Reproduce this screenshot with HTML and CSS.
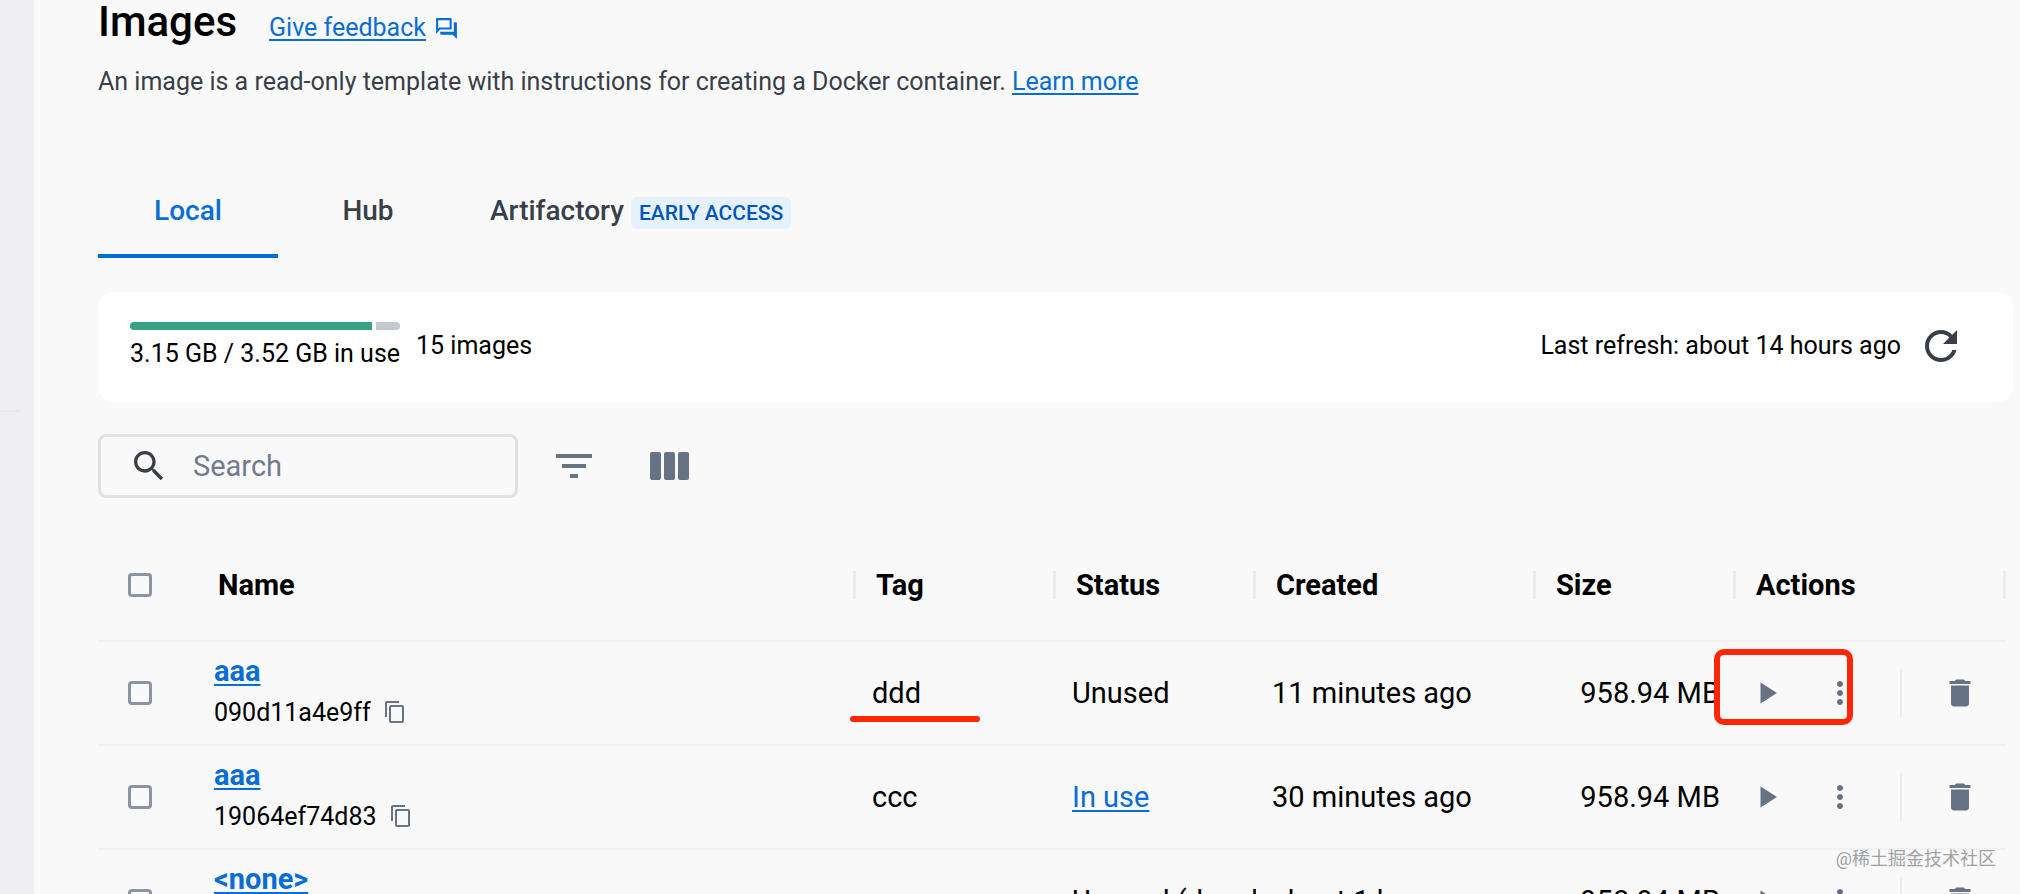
FILE: index.html
```
<!DOCTYPE html>
<html lang="en">
<head>
<meta charset="utf-8">
<title>Images</title>
<link rel="stylesheet" href="styles.css">
</head>
<body>
<svg class="sprite" aria-hidden="true">
  <symbol id="forum" viewBox="0 0 24 24"><path d="M15 4v7H5.170L4 12.170V4h11m1-2H3c-.55 0-1 .45-1 1v14l4-4h10c.55 0 1-.45 1-1V3c0-.55-.45-1-1-1zm5 4h-2v9H6v2c0 .55.45 1 1 1h11l4 4V7c0-.55-.45-1-1-1z"/></symbol>
  <symbol id="refresh" viewBox="0 0 24 24"><path d="M17.650 6.350C16.200 4.900 14.210 4 12 4c-4.420 0-7.990 3.580-7.990 8s3.570 8 7.990 8c3.730 0 6.840-2.550 7.730-6h-2.080c-.82 2.330-3.040 4-5.650 4-3.310 0-6-2.690-6-6s2.690-6 6-6c1.660 0 3.140.69 4.220 1.780L13 11h7V4l-2.350 2.350z"/></symbol>
  <symbol id="search" viewBox="0 0 24 24"><path d="M15.500 14h-.79l-.28-.27C15.410 12.590 16 11.110 16 9.500 16 5.910 13.090 3 9.500 3S3 5.910 3 9.500 5.910 16 9.500 16c1.610 0 3.090-.59 4.230-1.570l.27.28v.79l5 4.990L20.490 19l-4.990-5zm-6 0C7.010 14 5 11.990 5 9.500S7.010 5 9.500 5 14 7.010 14 9.500 11.990 14 9.500 14z"/></symbol>
  <symbol id="filter" viewBox="0 0 24 24"><path d="M10 18h4v-2h-4v2zM3 6v2h18V6H3zm3 7h12v-2H6v2z"/></symbol>
  <symbol id="columns" viewBox="0 0 39 28"><rect width="11" height="28" rx="2"/><rect x="14" width="11" height="28" rx="2"/><rect x="28" width="11" height="28" rx="2"/></symbol>
  <symbol id="copy" viewBox="0 0 24 24"><path d="M16 1H4c-1.100 0-2 .9-2 2v14h2V3h12V1zm3 4H8c-1.100 0-2 .9-2 2v14c0 1.100.9 2 2 2h11c1.100 0 2-.9 2-2V7c0-1.100-.9-2-2-2zm0 16H8V7h11v14z"/></symbol>
  <symbol id="play" viewBox="0 0 24 24"><path d="M7 5v14l11-7z"/></symbol>
  <symbol id="more" viewBox="0 0 24 24"><path d="M12 8c1.100 0 2-.9 2-2s-.9-2-2-2-2 .9-2 2 .9 2 2 2zm0 2c-1.100 0-2 .9-2 2s.9 2 2 2 2-.9 2-2-.9-2-2-2zm0 6c-1.100 0-2 .9-2 2s.9 2 2 2 2-.9 2-2-.9-2-2-2z"/></symbol>
  <symbol id="trash" viewBox="0 0 24 24"><path d="M6 19c0 1.100.9 2 2 2h8c1.100 0 2-.9 2-2V7H6v12zM19 4h-3.500l-1-1h-5l-1 1H5v2h14V4z"/></symbol>
</svg>
<div class="app">
  <aside class="rail"><hr class="rail-rule"></aside>
  <main class="page">
    <header class="heading">
      <h1>Images</h1>
      <a class="feedback" href="#"><span class="link-text">Give feedback</span><svg class="icon-small"><use href="#forum"/></svg></a>
    </header>
    <p class="intro">An image is a read-only template with instructions for creating a Docker container. <a href="#">Learn more</a></p>
    <nav class="tabs">
      <button class="tab active" type="button">Local</button>
      <button class="tab" type="button">Hub</button>
      <button class="tab" type="button">Artifactory <span class="badge">EARLY ACCESS</span></button>
    </nav>
    <section class="usage">
      <div class="disk">
        <div class="meter"><span class="used"></span><span class="free"></span></div>
        <span>3.15 GB / 3.52 GB in use</span>
      </div>
      <span class="count">15 images</span>
      <span class="last">Last refresh: about 14 hours ago</span>
      <button class="refresh" type="button" aria-label="Refresh"><svg class="icon-refresh"><use href="#refresh"/></svg></button>
    </section>
    <div class="toolbar">
      <label class="search"><svg class="icon-search"><use href="#search"/></svg><input type="text" placeholder="Search" aria-label="Search"></label>
      <button type="button" aria-label="Filter"><svg class="icon-filter"><use href="#filter"/></svg></button>
      <button class="column-picker" type="button" aria-label="Columns"><svg class="icon-columns"><use href="#columns"/></svg></button>
    </div>
    <table class="images">
      <colgroup><col class="c-check"><col class="c-name"><col class="c-tag"><col class="c-status"><col class="c-created"><col class="c-size"><col class="c-actions"></colgroup>
      <thead>
        <tr>
          <th><input type="checkbox" aria-label="Select all images"></th>
          <th><div class="label">Name</div></th><th><div class="label">Tag</div></th><th><div class="label">Status</div></th><th><div class="label">Created</div></th><th><div class="label">Size</div></th><th><div class="label">Actions</div></th>
        </tr>
      </thead>
      <tbody>
        <tr>
          <td><input type="checkbox" aria-label="Select 090d11a4e9ff"></td>
          <td><a class="name" href="#">aaa</a><div class="hash">090d11a4e9ff<button type="button" aria-label="Copy"><svg class="icon-copy"><use href="#copy"/></svg></button></div></td>
          <td><span class="marked">ddd</span></td>
          <td>Unused</td>
          <td>11 minutes ago</td>
          <td class="size">958.94 MB</td>
          <td class="action-cell"><div class="actions highlighted"><button type="button" aria-label="Run"><svg class="icon-action"><use href="#play"/></svg></button><button class="more" type="button" aria-label="More"><svg class="icon-action"><use href="#more"/></svg></button><button class="delete" type="button" aria-label="Delete"><svg class="icon-action"><use href="#trash"/></svg></button></div></td>
        </tr>
        <tr>
          <td><input type="checkbox" aria-label="Select 19064ef74d83"></td>
          <td><a class="name" href="#">aaa</a><div class="hash">19064ef74d83<button type="button" aria-label="Copy"><svg class="icon-copy"><use href="#copy"/></svg></button></div></td>
          <td>ccc</td>
          <td><a href="#">In use</a></td>
          <td>30 minutes ago</td>
          <td class="size">958.94 MB</td>
          <td class="action-cell"><div class="actions"><button type="button" aria-label="Run"><svg class="icon-action"><use href="#play"/></svg></button><button class="more" type="button" aria-label="More"><svg class="icon-action"><use href="#more"/></svg></button><button class="delete" type="button" aria-label="Delete"><svg class="icon-action"><use href="#trash"/></svg></button></div></td>
        </tr>
        <tr>
          <td><input type="checkbox" aria-label="Select untagged image"></td>
          <td><a class="name" href="#">&lt;none&gt;</a><div class="hash"></div></td>
          <td></td>
          <td><div class="clip">Unused (dangling)</div></td>
          <td>about 1 hour ago</td>
          <td class="size">958.94 MB</td>
          <td class="action-cell"><div class="actions"><button type="button" aria-label="Run"><svg class="icon-action"><use href="#play"/></svg></button><button class="more" type="button" aria-label="More"><svg class="icon-action"><use href="#more"/></svg></button><button class="delete" type="button" aria-label="Delete"><svg class="icon-action"><use href="#trash"/></svg></button></div></td>
        </tr>
      </tbody>
    </table>
  </main>
  <div class="watermark" lang="zh">@稀土掘金技术社区</div>
</div>
</body>
</html>
```
FILE: styles.css
```
*, *::before, *::after { box-sizing: border-box; }
body { margin: 0; font-family: Roboto, "Noto Sans CJK SC", sans-serif; font-size: 29px; color: #000; background: #f9f9fa; }
.sprite { display: none; }
svg { display: block; fill: currentColor; }
button { margin: 0; padding: 0; border: 0; background: none; font: inherit; color: #677285; }
a { color: #086dd7; text-decoration-thickness: 2px; text-underline-offset: 3px; }
.app { position: relative; display: flex; height: 100vh; overflow: hidden; }
.rail { flex: 0 0 34px; padding-top: 410px; background: #efeff2; }
.rail-rule { width: 20px; margin: 0; border: 0; border-top: 2px solid #e6e7ea; }
.page { flex: 1; min-width: 0; padding: 0 7px 0 64px; }

.heading { display: flex; align-items: center; gap: 32px; height: 44px; }
h1 { margin: 0; font-size: 42px; font-weight: 500; line-height: 44px; }
.feedback { display: flex; align-items: center; gap: 8px; padding-top: 12px; font-size: 25px; line-height: 32px; text-decoration: none; }
.link-text { text-decoration: underline; text-decoration-thickness: 2px; }
.icon-small { width: 25px; height: 25px; }
.intro { margin: 20px 0 0; font-size: 25px; line-height: 36px; color: #393f49; }

.tabs { display: flex; height: 96px; margin-top: 62px; }
.tab { min-width: 180px; height: 96px; padding: 4px 32px 0; border-bottom: 4px solid transparent; font-size: 28px; font-weight: 500; color: #393f49; }
.tab.active { border-color: #086dd7; color: #086dd7; }
.badge { padding: 4px 8px; border-radius: 6px; background: #e5f2fc; font-size: 21px; color: #0055b8; }

.usage { display: flex; align-items: center; height: 110px; margin-top: 34px; padding: 0 48px 2px 32px; border-radius: 16px; background: #fff; font-size: 25px; line-height: 32px; }
.disk { display: flex; flex-direction: column; gap: 8px; }
.meter { display: flex; gap: 4px; height: 8px; border-radius: 4px; overflow: hidden; }
.used { flex: 10; background: #38a087; }
.free { flex: 1; background: #c4c8d1; }
.count { margin-left: 16px; }
.last { margin-left: auto; }
.refresh { margin-left: 16px; color: #393f49; }
.icon-refresh { width: 48px; height: 48px; }

.toolbar { display: flex; align-items: center; gap: 32px; margin-top: 32px; }
.search { display: flex; align-items: center; gap: 24px; width: 420px; height: 64px; padding: 0 28px; border: 3px solid #e1e2e6; border-radius: 8px; color: #393f49; }
.search input { flex: 1; min-width: 0; padding: 0; border: 0; outline: 0; background: none; font: inherit; }
.search input::placeholder { color: #737a8c; opacity: 1; }
.icon-search { width: 40px; height: 40px; }
.icon-filter { width: 48px; height: 48px; }
.column-picker { padding-left: 20px; }
.icon-columns { width: 39px; height: 28px; }

.table-wrap { padding-right: 8px; }
.images { width: calc(100% - 7px); margin-top: 31px; border-collapse: collapse; table-layout: fixed; }
.c-check { width: 112px; }
.c-tag, .c-status, .c-size { width: 200px; }
.c-created { width: 280px; }
.c-actions { width: 270px; }
.images tr { height: 104px; border-bottom: 2px solid #f0f1f3; }
.images thead tr { height: 112px; }
.images th, .images td { padding: 0 0 0 16px; text-align: left; font-weight: 400; white-space: nowrap; }
.images th:nth-child(2), .images td:nth-child(2) { padding-left: 4px; }
.images th:first-child, .images td:first-child { padding-left: 30px; }
.images .label { height: 28px; padding-left: 4px; border-right: 3px solid #ececef; font-weight: 700; line-height: 28px; }
.images .size { padding-right: 16px; text-align: right; }
.images .action-cell { padding-left: 0; }
.clip { overflow: hidden; }
input[type="checkbox"] { display: block; width: 24px; height: 24px; margin: 0; appearance: none; border: 3px solid #8c93a5; border-radius: 4px; }
.name { font-weight: 700; line-height: 38px; }
.hash { display: flex; align-items: center; gap: 12px; height: 44px; font-size: 25px; }
.icon-copy { width: 24px; height: 24px; }
.marked { position: relative; }
.marked::after { content: ""; position: absolute; left: -22px; top: 40px; width: 130px; height: 6px; border-radius: 3px; background: #ff2606; }
.actions { position: relative; display: flex; align-items: center; height: 48px; padding-left: 14px; }
.icon-action { width: 36px; height: 36px; }
.more { margin-left: 36px; }
.delete { margin-left: 42px; padding: 6px 0 6px 40px; border-left: 2px solid #ececef; }
.highlighted::after { content: ""; position: absolute; left: -22px; top: -20px; width: 139px; height: 76px; border: 6px solid #ff2606; border-radius: 10px; }
.watermark { position: absolute; right: 24px; bottom: 22px; font-size: 18px; line-height: 26px; color: #a2a2a4; }
```
